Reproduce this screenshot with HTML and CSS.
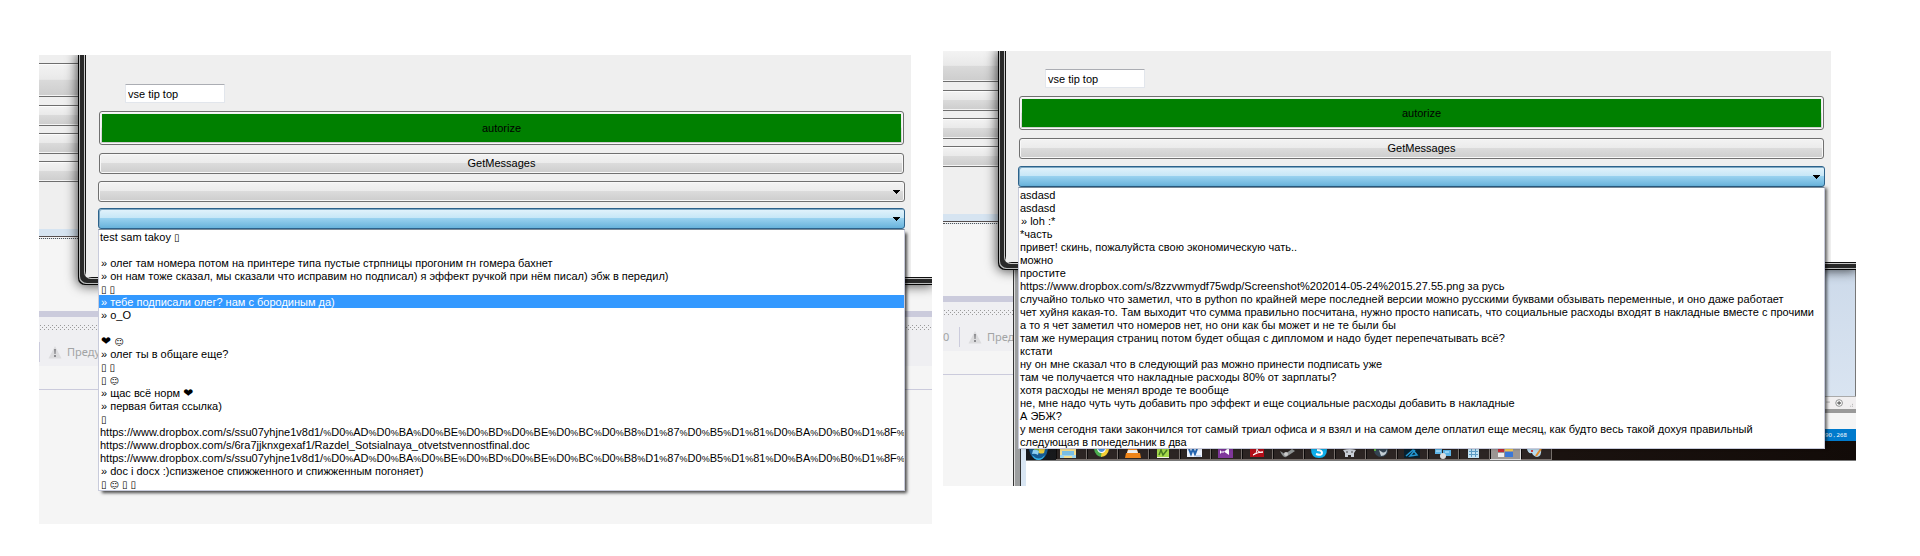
FILE: index.html
```html
<!DOCTYPE html>
<html lang="ru">
<head>
<meta charset="utf-8">
<title>GetMessages</title>
<link rel="stylesheet" href="styles.css">
</head>
<body>
<main class="shots">
  <section class="shot shot-a">
    <div class="ide">
      <div class="strip">
        <div class="bar tall"></div><div class="bar"></div><div class="bar"></div><div class="bar"></div>
      </div>
      <div class="edge"></div>
      <div class="blank"></div>
      <div class="band"></div>
      <div class="tools">
        <div class="dots"></div>
        <div class="tool-row">
          <span class="sep"></span>
          <svg class="warn" viewBox="0 0 14 14"><path d="M7 1 L13.5 13.5 H.5 Z" fill="#dcdcde"/><path d="M6 4h2l-.4 5h-1.2zM6 10h2v2H6z" fill="#8c8c90"/></svg>
          <span>Преду</span>
        </div>
      </div>
      <div class="rule"></div>
    </div>
    <div class="window">
      <form class="client">
        <input class="field" type="text" value="vse tip top" aria-label="Статус">
        <button class="btn auth" type="button"><span>autorize</span></button>
        <button class="btn get" type="button">GetMessages</button>
        <div class="combo first">
          <select aria-label="Диалог"><option></option></select>
          <svg class="arrow" viewBox="0 0 7 4"><path d="M0 0h7v1H6v1H5v1H4v1H3V3H2V2H1V1H0z"/></svg>
        </div>
        <div class="combo open second">
          <select aria-label="Сообщения"><option></option></select>
          <svg class="arrow" viewBox="0 0 7 4"><path d="M0 0h7v1H6v1H5v1H4v1H3V3H2V2H1V1H0z"/></svg>
          <ul class="list" role="listbox" aria-label="Сообщения">
            <li>test sam takoy <i>▯</i></li>
            <li></li>
            <li class="in">» олег там номера потом на принтере типа пустые стрпницы прогоним гн гомера бахнет</li>
            <li class="in">» он нам тоже сказал, мы сказали что исправим но подписал) я эффект ручкой при нём писал) эбж в передил)</li>
            <li class="in"><i>▯</i> <i>▯</i></li>
            <li class="in selected">» тебе подписали олег? нам с бородиным да)</li>
            <li class="in">» o_O</li>
            <li></li>
            <li class="in"><b class="heart">❤</b> <b>☺</b></li>
            <li class="in">» олег ты в общаге еще?</li>
            <li class="in"><i>▯</i> <i>▯</i></li>
            <li class="in"><i>▯</i> <b>☺</b></li>
            <li class="in">» щас всё норм <b class="heart">❤</b></li>
            <li class="in">» первая битая ссылка)</li>
            <li class="in"><i>▯</i></li>
            <li>https://www.dropbox.com/s/ssu07yhjne1v8d1/<s>%</s>D0<s>%</s>AD<s>%</s>D0<s>%</s>BA<s>%</s>D0<s>%</s>BE<s>%</s>D0<s>%</s>BD<s>%</s>D0<s>%</s>BE<s>%</s>D0<s>%</s>BC<s>%</s>D0<s>%</s>B8<s>%</s>D1<s>%</s>87<s>%</s>D0<s>%</s>B5<s>%</s>D1<s>%</s>81<s>%</s>D0<s>%</s>BA<s>%</s>D0<s>%</s>B0<s>%</s>D1<s>%</s>8F<s>%</s>2</li>
            <li>https://www.dropbox.com/s/6ra7jjknxgexaf1/Razdel_Sotsialnaya_otvetstvennostfinal.doc</li>
            <li>https://www.dropbox.com/s/ssu07yhjne1v8d1/<s>%</s>D0<s>%</s>AD<s>%</s>D0<s>%</s>BA<s>%</s>D0<s>%</s>BE<s>%</s>D0<s>%</s>BD<s>%</s>D0<s>%</s>BE<s>%</s>D0<s>%</s>BC<s>%</s>D0<s>%</s>B8<s>%</s>D1<s>%</s>87<s>%</s>D0<s>%</s>B5<s>%</s>D1<s>%</s>81<s>%</s>D0<s>%</s>BA<s>%</s>D0<s>%</s>B0<s>%</s>D1<s>%</s>8F<s>%</s>2</li>
            <li class="in">» doc i docx :)спизженое спижженного и спижженным погоняет)</li>
            <li class="in"><i>▯</i> <b>☺</b> <i>▯</i> <i>▯</i></li>
          </ul>
        </div>
      </form>
    </div>
  </section>

  <section class="shot shot-b">
    <div class="ide">
      <div class="strip">
        <div class="bar tall"></div><div class="bar"></div><div class="bar"></div><div class="bar"></div>
      </div>
      <div class="edge"></div>
      <div class="blank"></div>
      <div class="band"></div>
      <div class="tools">
        <div class="dots"></div>
        <div class="tool-row">
          <span class="zero">0</span>
          <span class="sep"></span>
          <svg class="warn" viewBox="0 0 14 14"><path d="M7 1 L13.5 13.5 H.5 Z" fill="#dcdcde"/><path d="M6 4h2l-.4 5h-1.2zM6 10h2v2H6z" fill="#8c8c90"/></svg>
          <span>Пред</span>
        </div>
      </div>
      <div class="rule"></div>
    </div>
    <div class="frame-left"></div>
    <div class="side">
      <div class="page"></div>
      <div class="zoombar"><svg viewBox="0 0 31 13"><path d="M0 5.500h4" stroke="#aaa"/><circle cx="14" cy="6.500" r="3.600" fill="#fff" stroke="#888"/><path d="M12 6.500h4M14 4.500v4" stroke="#666" stroke-width="1.500"/><path d="M28 8h1M26 10h1M28 10h1" stroke="#aaa"/></svg></div>
      <div class="lip"></div>
      <div class="status">90 , 268</div>
    </div>
    <div class="taskbar">
      <span class="orb"><svg viewBox="0 0 30 12"><path d="M3 0h19q-2 11-9.500 11T3 0z" fill="#175b93"/><path d="M6 6q7 7 13 0-2 5-6.500 5T6 6z" fill="#35b5e8"/><path d="M8 0h5v4q-3-1-5 0z" fill="#79b63c"/><path d="M13 0h6l-1 4q-3 1-5 0z" fill="#e9c93a"/><path d="M7 1q3-1 6 1l-1 4q-3-2-6-1z" fill="#8fd0f2"/></svg></span>
      <span class="task"><svg viewBox="0 0 30 12"><path d="M4 0h16v9H4z" fill="#f2dd8e"/><path d="M6 2h12v4H6z" fill="#79bfe4"/><path d="M4 6h16v3h-4V7H8v2H4z" fill="#9ed5ec"/></svg></span>
      <span class="task"><svg viewBox="0 0 30 12"><path d="M7 0h8v8Q8 7 7 0z" fill="#4caf50"/><path d="M14 8q7-1 8-8h-7z" fill="#f5cf35"/><path d="M10 0h9q-1 4-4.500 4T10 0z" fill="#fff"/><path d="M11 0h7q-1 3-3.500 3T11 0z" fill="#4f93e0"/></svg></span>
      <span class="task"><svg viewBox="0 0 30 12"><path d="M10 0h9l1 4h2l1 5H7l1-5h1z" fill="#f08519"/><path d="M10 1h9l1 3H9z" fill="#eee"/></svg></span>
      <span class="task"><svg viewBox="0 0 30 12"><path d="M8 0h12v9H8z" fill="#a5d94b"/><path d="M10 6l2-5 2 5 4-5" fill="none" stroke="#477b23" stroke-width="1.500"/><path d="M8 8h12v1H8z" fill="#f4f4e8"/></svg></span>
      <span class="task"><svg viewBox="0 0 30 12"><path d="M7 0h15v8H7z" fill="#eef4ff"/><path d="M9 0l2 5 2-5 2 5 2-5" fill="none" stroke="#2566b2" stroke-width="2"/><path d="M16 7h5" stroke="#90aede"/></svg></span>
      <span class="task"><svg viewBox="0 0 30 12"><path d="M7 0h15v9H7z" fill="#80379b"/><path d="M9 1l3 3 4-4h2v6l-6-4-3 3z" fill="#fff"/></svg></span>
      <span class="task"><svg viewBox="0 0 30 12"><path d="M8 0h14v8H8z" fill="#b30e18"/><path d="M11 6q5-2 4-6 1 4 6 3-5 0-10 3z" fill="none" stroke="#fff"/></svg></span>
      <span class="task"><svg viewBox="0 0 30 12"><path d="M7 2l5 3 7-5 3 2-9 6q-3 1-6-6z" fill="#8d9191"/><circle cx="13" cy="5" r="2" fill="#ccc"/></svg></span>
      <span class="task"><svg viewBox="0 0 30 12"><path d="M7 0h16q0 9-8 9T7 0z" fill="#0fafea"/><path d="M12 5q6 2 6-1t-5-3" fill="none" stroke="#fff" stroke-width="2"/></svg></span>
      <span class="task"><svg viewBox="0 0 30 12"><path d="M8 1q7-2 13 0l-2 3v4h-3V6h-3v2h-3V4z" fill="#c9ced6"/><path d="M11 3h2M16 3h2" stroke="#444"/></svg></span>
      <span class="task"><svg viewBox="0 0 30 12"><circle cx="15" cy="1" r="7" fill="#344452"/><path d="M13 1l2 6q6 0 6-7-2 5-5 3z" fill="#c4ced4"/><path d="M8 0h2v2H8z" fill="#5bb544"/></svg></span>
      <span class="task"><svg viewBox="0 0 30 12"><path d="M7 0h16v9H7z" fill="#08202e"/><path d="M9 7l7-6 4 5-7 1 5-6" fill="none" stroke="#2397d2" stroke-width="1.500"/></svg></span>
      <span class="task"><svg viewBox="0 0 30 12"><path d="M7 0h7v5H7zM15 1h8v6h-8z" fill="#5cb3e5"/><path d="M8 2h5M17 3h4" stroke="#cff0ff"/><circle cx="15" cy="7" r="3" fill="#ddd"/></svg></span>
      <span class="task"><svg viewBox="0 0 30 12"><path d="M9 0h11v9H9z" fill="#c4e3f4"/><path d="M10 2.500h9M10 5.500h9M12.500 0v8M16.500 0v8" stroke="#5c9bc4"/></svg></span>
      <span class="task active"><svg viewBox="0 0 30 12"><path d="M8 0h6v3H8z" fill="#c62c36"/><path d="M8 4h6v4H8z" fill="#eee"/><path d="M15 0h8v2h-8z" fill="#f2cb54"/><path d="M15 3h8v5h-8z" fill="#3a78d8"/></svg></span>
      <span class="task"><svg viewBox="0 0 30 12"><path d="M6 0h14q1 7-4 8-4-1-5-4-4 1-5-4z" fill="#b8d9ec"/><path d="M10 1h2v2h-2z" fill="#cf4444"/><path d="M20 0l-5 7" stroke="#e28b2d" stroke-width="2"/></svg></span>
    </div>
    <div class="window">
      <form class="client">
        <input class="field" type="text" value="vse tip top" aria-label="Статус">
        <button class="btn auth" type="button"><span>autorize</span></button>
        <button class="btn get" type="button">GetMessages</button>
        <div class="combo open first">
          <select aria-label="Сообщения"><option></option></select>
          <svg class="arrow" viewBox="0 0 7 4"><path d="M0 0h7v1H6v1H5v1H4v1H3V3H2V2H1V1H0z"/></svg>
          <ul class="list" role="listbox" aria-label="Сообщения">
            <li>asdasd</li>
            <li>asdasd</li>
            <li class="in">» loh :*</li>
            <li>*часть</li>
            <li>привет! скинь, пожалуйста свою экономическую чать..</li>
            <li>можно</li>
            <li>простите</li>
            <li>https://www.dropbox.com/s/8zzvwmydf75wdp/Screenshot%202014-05-24%2015.27.55.png за русь</li>
            <li>случайно только что заметил, что в python по крайней мере последней версии можно русскими буквами обзывать переменные, и оно даже работает</li>
            <li>чет хуйня какая-то. Там выходит что сумма правильно посчитана, нужно просто написать, что социальные расходы входят в накладные вместе с прочими</li>
            <li>а то я чет заметил что номеров нет, но они как бы может и не те были бы</li>
            <li>там же нумерация страниц потом будет общая с дипломом и надо будет перепечатывать всё?</li>
            <li>кстати</li>
            <li>ну он мне сказал что в следующий раз можно принести подписать уже</li>
            <li>там че получается что накладные расходы 80% от зарплаты?</li>
            <li>хотя расходы не менял вроде те вообще</li>
            <li>не, мне надо чуть чуть добавить про эффект и еще социальные расходы добавить в накладные</li>
            <li>А ЭБЖ?</li>
            <li>у меня сегодня таки закончился тот самый триал офиса и я взял и на самом деле оплатил еще месяц, как будто весь такой дохуя правильный</li>
            <li>следующая в понедельник в два</li>
          </ul>
        </div>
      </form>
    </div>
  </section>
</main>
</body>
</html>
```
FILE: styles.css
```css
* { box-sizing: border-box; }
body { margin: 0; background: #fff; color: #000; font: 11px/13px "Liberation Sans", Arial, sans-serif; }
.shots { display: flex; align-items: flex-start; gap: 11px; padding: 51px 64px 0 39px; }
.shot { position: relative; overflow: hidden; min-width: 0; }
.shot-a { flex: 893; margin-top: 4px; }
.shot-b { flex: 913; }

/* code editor behind the form */
.ide { background: #f5f5f5; overflow: hidden; white-space: nowrap; }
.shot-a .ide { padding-bottom: 134px; }
.shot-b .ide { width: 70px; padding-bottom: 111px; }
.strip { background: #efefef; display: flex; flex-direction: column; gap: 7px; height: 174px; }
.shot-a .strip { padding-top: 8px; }
.shot-b .strip { height: 163px; }
.bar { height: 21px; flex: none; border: solid #6e6e6e; border-width: 1px 0; background: linear-gradient(#f3f3f3, #e9e9e9 48%, #dadada 50%, #cdcdcd); box-shadow: inset 0 1px #fcfcfc, inset 0 -1px #f4f4f4; }
.bar.tall { height: 34px; margin-bottom: 1px; }
.shot-b .bar.tall { height: 31px; border-top: 0; box-shadow: inset 0 -1px #f4f4f4; }
.edge { height: 10px; background: #d6e4f1; border-bottom: 1px dotted #555; box-shadow: inset 0 -1px #f5f5f5, inset 0 -2px #554f50; }
.blank { height: 72px; }
.band { height: 6px; background: #cbcbdc; }
.tools { height: 49px; background: #efeff2; padding-top: 8px; }
.dots { height: 5px; margin-left: 1px; --dot: repeating-linear-gradient(90deg, #999 0 1px, transparent 1px 4px);
  background: var(--dot) 0 0 / 100% 1px no-repeat, var(--dot) 2px 2px / 100% 1px no-repeat, var(--dot) 0 4px / 100% 1px no-repeat; }
.tool-row { display: flex; align-items: center; height: 20px; margin-top: 12px; color: #a2a4a5; font: 11px/20px "Noto Sans", sans-serif; }
.tool-row > * { flex: none; }
.sep { width: 1px; height: 20px; background: #cbcbdc; margin-right: 8px; }
.zero { width: 16px; }
.warn { width: 14px; height: 14px; margin-right: 5px; }
.rule { height: 24px; border-bottom: 1px solid #cbcbdc; }

/* form window */
.window { position: absolute; z-index: 3; top: 0; right: 0; background: #fff; padding: 0 0 8px 8px; border-radius: 0 0 0 7px;
  box-shadow: inset 1px -1px #050505, inset 2px -2px #b9bbbb, inset 6px -6px #292929, inset 7px -7px #c8c8c8, inset 8px -8px #111, 0 0 12px 1px rgba(0,0,0,.7); }
.shot-a .window { left: 39px; height: 230px; }
.shot-b .window { left: 55px; height: 219px; }
.client { display: flex; flex-direction: column; height: 100%; background: #efefef; padding: 29px 7px 0 13px; }
.shot-a .client { margin-right: 21px; }
.shot-b .client { margin-right: 25px; padding-top: 18px; }
.field { width: 100px; height: 19px; margin-left: 26px; padding: 0 2px; border: 1px solid #e2e6ec; border-top-color: #abadb3; border-radius: 1px; background: #fff; color: inherit; font: inherit; }
.btn { display: flex; align-items: center; justify-content: center; margin-top: 8px; height: 21px; padding: 0; border: 1px solid #707070; border-radius: 3px; color: #000; font: inherit; background: linear-gradient(#f3f3f3, #ebebeb 48%, #dbdbdb 50%, #cdcdcd); box-shadow: inset 0 0 0 1px #f8f8f8; }
.auth { height: 34px; padding: 2px; }
.auth span { display: flex; flex: 1; align-items: center; justify-content: center; align-self: stretch; background: #008000; }
.combo { position: relative; height: 21px; margin: 0 -1px; }
.combo.first { margin-top: 7px; }
.combo.second { margin-top: 6px; }
.combo select { display: block; appearance: none; width: 100%; height: 21px; border: 1px solid #707070; border-radius: 3px; font: inherit; background: linear-gradient(#f3f3f3, #ebebeb 48%, #dbdbdb 50%, #cdcdcd); box-shadow: inset 0 0 0 1px #f8f8f8; }
.combo.open select { border-color: #2c628b; background: linear-gradient(#e3f3fb, #c5e6f7 48%, #98d1ef 50%, #68b3db); box-shadow: inset 1px 1px #7fa9c4; }
.arrow { position: absolute; right: 5px; top: 9px; width: 7px; height: 4px; }
.list { position: absolute; z-index: 5; top: 21px; left: 0; right: 0; margin: 0; padding: 0; list-style: none; background: #fff; border: 1px solid #c8cbdb; border-top-color: #7b8b98; }
.shot-a .list { box-shadow: 3px 3px 3px -1px rgba(0,0,0,.7); }
.shot-b .list { box-shadow: 3px 0 3px -1px rgba(0,0,0,.6); }
.list li { height: 13px; line-height: 15px; padding-left: 1px; white-space: pre; overflow: hidden; }
.list .in { padding-left: 2px; }
.list .selected { background: #3399ff; color: #fff; }
.list i { font: 10px/12px "DejaVu Sans", sans-serif; }
.list b { font: bold 9px/12px "DejaVu Sans", sans-serif; }
.list s { font-size: 9px; text-decoration: none; }
.list .heart { font-size: 12px; }

/* windows and taskbar behind the second form */
.frame-left { position: absolute; left: 70px; top: 215px; bottom: 0; width: 13px; border-left: 1px solid #333; background: linear-gradient(90deg, #9c9e9f 0 6px, #333 6px 7px, #d9e6f3 7px); box-shadow: inset 1px 0 #ddd; }
.side { position: absolute; right: 0; top: 219px; width: 31px; }
.page { height: 126px; background: linear-gradient(#cddaea, #d9e4f1); border-right: 1px solid #777; }
.zoombar { height: 13px; background: #f1eff0; border-top: 1px solid #aaa; }
.zoombar svg { display: block; width: 31px; height: 12px; }
.lip { height: 20px; border-top: 4px solid #9a9a9a; background: #f5f5f5; }
.status { height: 12px; background: #007acc; color: #fff; font: 6px/12px "Noto Sans", sans-serif; white-space: nowrap; }
.taskbar { position: absolute; left: 83px; right: 0; top: 390px; height: 20px; padding-top: 8px; display: flex; background: linear-gradient(90deg, #17191c, #1b1310 60%, #120b08); border-bottom: 1px solid #777; }
.task, .orb { display: block; width: 31px; height: 11px; flex: none; }
.orb { width: 30px; }
.task { border: solid #77706c; border-width: 0 1px 1px 0; background: #2c2523; box-shadow: inset 1px 0 #0c0a0a; }
.task.active { background: #9b9693; border-color: #ddd; }
.task svg, .orb svg { display: block; width: 30px; height: 12px; }
```
